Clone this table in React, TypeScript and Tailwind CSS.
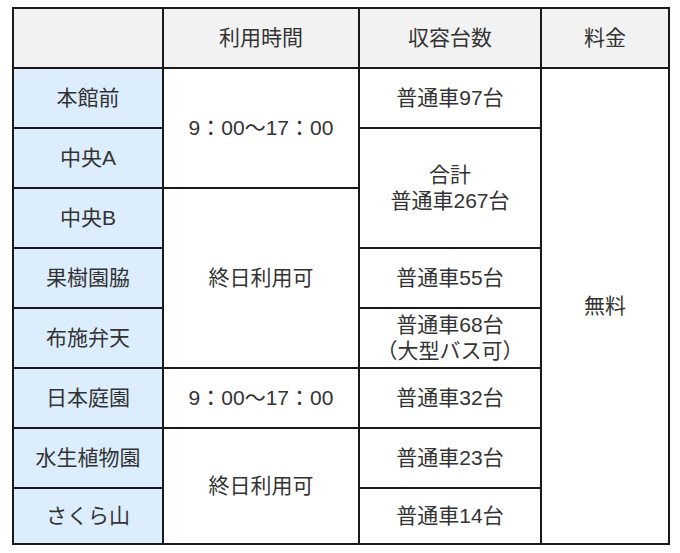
const rows = [
  { name: "本館前" },
  { name: "中央A" },
  { name: "中央B" },
  { name: "果樹園脇" },
  { name: "布施弁天" },
  { name: "日本庭園" },
  { name: "水生植物園" },
  { name: "さくら山" },
]

const cell = "border-2 border-[#1a1a1a] text-center align-middle p-0"
const nameCell = `${cell} bg-[#dcedfd]`

export default function App() {
  return (
    <div className="min-h-[553px] bg-white pl-[12px] pt-[7px] font-['Liberation_Sans','Noto_Sans_CJK_JP',sans-serif] text-[21px] leading-[26px] text-[#333]">
      <table className="w-[656px] table-fixed border-collapse">
        <colgroup>
          <col className="w-[150px]" />
          <col className="w-[196px]" />
          <col className="w-[182px]" />
          <col className="w-[128px]" />
        </colgroup>
        <thead>
          <tr className="h-[60px] bg-[#f2f2f2]">
            <th className={`${cell} font-normal`}></th>
            <th className={`${cell} font-normal`}>利用時間</th>
            <th className={`${cell} font-normal`}>収容台数</th>
            <th className={`${cell} font-normal`}>料金</th>
          </tr>
        </thead>
        <tbody>
          <tr className="h-[60px]">
            <td className={nameCell}>{rows[0].name}</td>
            <td className={cell} rowSpan={2}>9：00～17：00</td>
            <td className={cell}>普通車97台</td>
            <td className={cell} rowSpan={8}>無料</td>
          </tr>
          <tr className="h-[60px]">
            <td className={nameCell}>{rows[1].name}</td>
            <td className={cell} rowSpan={2}>
              合計
              <br />
              普通車267台
            </td>
          </tr>
          <tr className="h-[60px]">
            <td className={nameCell}>{rows[2].name}</td>
            <td className={cell} rowSpan={3}>終日利用可</td>
          </tr>
          <tr className="h-[60px]">
            <td className={nameCell}>{rows[3].name}</td>
            <td className={cell}>普通車55台</td>
          </tr>
          <tr className="h-[60px]">
            <td className={nameCell}>{rows[4].name}</td>
            <td className={cell}>
              普通車68台
              <br />
              （大型バス可）
            </td>
          </tr>
          <tr className="h-[60px]">
            <td className={nameCell}>{rows[5].name}</td>
            <td className={cell}>9：00～17：00</td>
            <td className={cell}>普通車32台</td>
          </tr>
          <tr className="h-[60px]">
            <td className={nameCell}>{rows[6].name}</td>
            <td className={cell} rowSpan={2}>終日利用可</td>
            <td className={cell}>普通車23台</td>
          </tr>
          <tr className="h-[56px]">
            <td className={nameCell}>{rows[7].name}</td>
            <td className={cell}>普通車14台</td>
          </tr>
        </tbody>
      </table>
    </div>
  )
}
